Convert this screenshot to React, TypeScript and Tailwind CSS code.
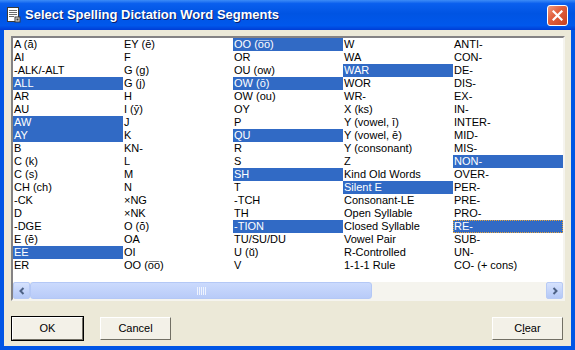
import React from "react";

const columns: { label: string; on?: boolean; focus?: boolean }[][] = [
  [
    { label: "A (ă)" },
    { label: "AI" },
    { label: "-ALK/-ALT" },
    { label: "ALL", on: true },
    { label: "AR" },
    { label: "AU" },
    { label: "AW", on: true },
    { label: "AY", on: true },
    { label: "B" },
    { label: "C (k)" },
    { label: "C (s)" },
    { label: "CH (ch)" },
    { label: "-CK" },
    { label: "D" },
    { label: "-DGE" },
    { label: "E (ĕ)" },
    { label: "EE", on: true },
    { label: "ER" },
  ],
  [
    { label: "EY (ē)" },
    { label: "F" },
    { label: "G (g)" },
    { label: "G (j)" },
    { label: "H" },
    { label: "I (ȳ)" },
    { label: "J" },
    { label: "K" },
    { label: "KN-" },
    { label: "L" },
    { label: "M" },
    { label: "N" },
    { label: "×NG" },
    { label: "×NK" },
    { label: "O (ŏ)" },
    { label: "OA" },
    { label: "OI" },
    { label: "OO (o͞o)" },
  ],
  [
    { label: "OO (o͞o)", on: true },
    { label: "OR" },
    { label: "OU (ow)" },
    { label: "OW (ō)", on: true },
    { label: "OW (ou)" },
    { label: "OY" },
    { label: "P" },
    { label: "QU", on: true },
    { label: "R" },
    { label: "S" },
    { label: "SH", on: true },
    { label: "T" },
    { label: "-TCH" },
    { label: "TH" },
    { label: "-TION", on: true },
    { label: "TU/SU/DU" },
    { label: "U (ŭ)" },
    { label: "V" },
  ],
  [
    { label: "W" },
    { label: "WA" },
    { label: "WAR", on: true },
    { label: "WOR" },
    { label: "WR-" },
    { label: "X (ks)" },
    { label: "Y (vowel, ī)" },
    { label: "Y (vowel, ē)" },
    { label: "Y (consonant)" },
    { label: "Z" },
    { label: "Kind Old Words" },
    { label: "Silent E", on: true },
    { label: "Consonant-LE" },
    { label: "Open Syllable" },
    { label: "Closed Syllable" },
    { label: "Vowel Pair" },
    { label: "R-Controlled" },
    { label: "1-1-1 Rule" },
  ],
  [
    { label: "ANTI-" },
    { label: "CON-" },
    { label: "DE-" },
    { label: "DIS-" },
    { label: "EX-" },
    { label: "IN-" },
    { label: "INTER-" },
    { label: "MID-" },
    { label: "MIS-" },
    { label: "NON-", on: true },
    { label: "OVER-" },
    { label: "PER-" },
    { label: "PRE-" },
    { label: "PRO-" },
    { label: "RE-", on: true, focus: true },
    { label: "SUB-" },
    { label: "UN-" },
    { label: "CO- (+ cons)" },
  ],
];

function TitleIcon() {
  return (
    <svg width="16" height="16" viewBox="0 0 16 16">
      <rect x="2.5" y="0.5" width="11" height="14" fill="#fff" stroke="#3a3a3a" />
      <rect x="4" y="3" width="8" height="1" fill="#6b6b6b" />
      <rect x="4" y="5" width="8" height="1" fill="#6b6b6b" />
      <rect x="4" y="7" width="8" height="1" fill="#6b6b6b" />
      <rect x="4" y="9" width="5" height="1" fill="#6b6b6b" />
      <rect x="10" y="10" width="5" height="5" fill="#d8d8d8" stroke="#3a3a3a" />
      <rect x="11.5" y="11.5" width="2" height="2" fill="#3a3a3a" />
    </svg>
  );
}

function CloseButton() {
  return (
    <div className="w-[21px] h-[21px] rounded-[3px] border border-white bg-[linear-gradient(135deg,#f09a7d_0%,#e2613f_40%,#c8401f_100%)] flex items-center justify-center">
      <svg width="11" height="11" viewBox="0 0 11 11">
        <path d="M1.5 1.5 L9.5 9.5 M9.5 1.5 L1.5 9.5" stroke="#fff" strokeWidth="2.2" strokeLinecap="square" />
      </svg>
    </div>
  );
}

function ScrollArrow({ dir }: { dir: "left" | "right" }) {
  return (
    <div className="w-[17px] h-[17px] rounded-[2px] border border-[#b7caf5] bg-[linear-gradient(to_bottom,#d6e2fd,#b4c8f6)] flex items-center justify-center">
      <svg width="8" height="8" viewBox="0 0 8 8">
        {dir === "left" ? (
          <path d="M5.5 1 L2.5 4 L5.5 7" fill="none" stroke="#4d6185" strokeWidth="2" />
        ) : (
          <path d="M2.5 1 L5.5 4 L2.5 7" fill="none" stroke="#4d6185" strokeWidth="2" />
        )}
      </svg>
    </div>
  );
}

function WinButton({ children, isDefault }: { children: React.ReactNode; isDefault?: boolean }) {
  return (
    <div
      className={
        "w-[73px] h-[25px] " +
        (isDefault ? "border border-black" : "border border-transparent")
      }
    >
      <div className="w-full h-full border-t border-l border-white border-b border-r border-b-[#716f64] border-r-[#716f64] bg-[#f3f1e8] flex items-center justify-center text-[11px] text-black">
        {children}
      </div>
    </div>
  );
}

export default function App() {
  return (
    <div
      className="w-[575px] h-[350px] flex flex-col bg-[#0055e5] overflow-hidden"
      style={{ fontFamily: '"Liberation Sans", Arial, sans-serif' }}
    >
      {/* title bar */}
      <div className="h-[30px] shrink-0 flex items-center pl-[5px] pr-[7px] bg-[linear-gradient(to_bottom,#3d8cf7_0%,#0a5fee_12%,#0054e3_45%,#0058ec_85%,#003dd5_100%)]">
        <TitleIcon />
        <span className="ml-[4px] text-white font-bold text-[13px] [text-shadow:1px_1px_0_#0a1f6a]">
          Select Spelling Dictation Word Segments
        </span>
        <div className="ml-auto">
          <CloseButton />
        </div>
      </div>

      {/* body */}
      <div className="flex-1 mx-[4px] mb-[4px] bg-[#ece9d8] flex flex-col pt-[6px] pl-[7px] pr-[6px]">
        <div className="h-[265px] border-2 border-t-[#848284] border-l-[#848284] border-b-[#f5f4ef] border-r-[#f5f4ef] bg-white flex flex-col">
          <div className="flex flex-1 text-[11px] text-black">
            {columns.map((col, ci) => (
              <div key={ci} className="w-[110px] flex flex-col">
                {col.map((item, ri) => (
                  <div
                    key={ri}
                    className={
                      "h-[13px] leading-[13px] pl-[1px] whitespace-nowrap " +
                      (item.on ? "bg-[#316ac5] text-white " : "") +
                      (item.focus ? "outline outline-1 outline-dotted outline-[#e3a33b] -outline-offset-1" : "")
                    }
                  >
                    {item.label}
                  </div>
                ))}
              </div>
            ))}
          </div>
          {/* horizontal scrollbar */}
          <div className="h-[17px] flex bg-[#f5f4ee]">
            <ScrollArrow dir="left" />
            <div className="w-[342px] h-[17px] rounded-[3px] border border-[#b4c8f6] bg-[linear-gradient(to_bottom,#cbdafd,#b8cbf8)] flex items-center justify-center">
              <svg width="9" height="8" viewBox="0 0 9 8">
                <path d="M0.5 0 V8 M2.5 0 V8 M4.5 0 V8 M6.5 0 V8 M8.5 0 V8" stroke="#eef3fe" strokeWidth="1" />
              </svg>
            </div>
            <div className="flex-1" />
            <ScrollArrow dir="right" />
          </div>
        </div>

        <div className="mt-[15px] flex items-center">
          <WinButton isDefault>OK</WinButton>
          <div className="ml-[15px]">
            <WinButton>Cancel</WinButton>
          </div>
          <div className="ml-auto mr-[1px]">
            <WinButton>
              <span>
                C<span className="underline">l</span>ear
              </span>
            </WinButton>
          </div>
        </div>
      </div>
    </div>
  );
}
